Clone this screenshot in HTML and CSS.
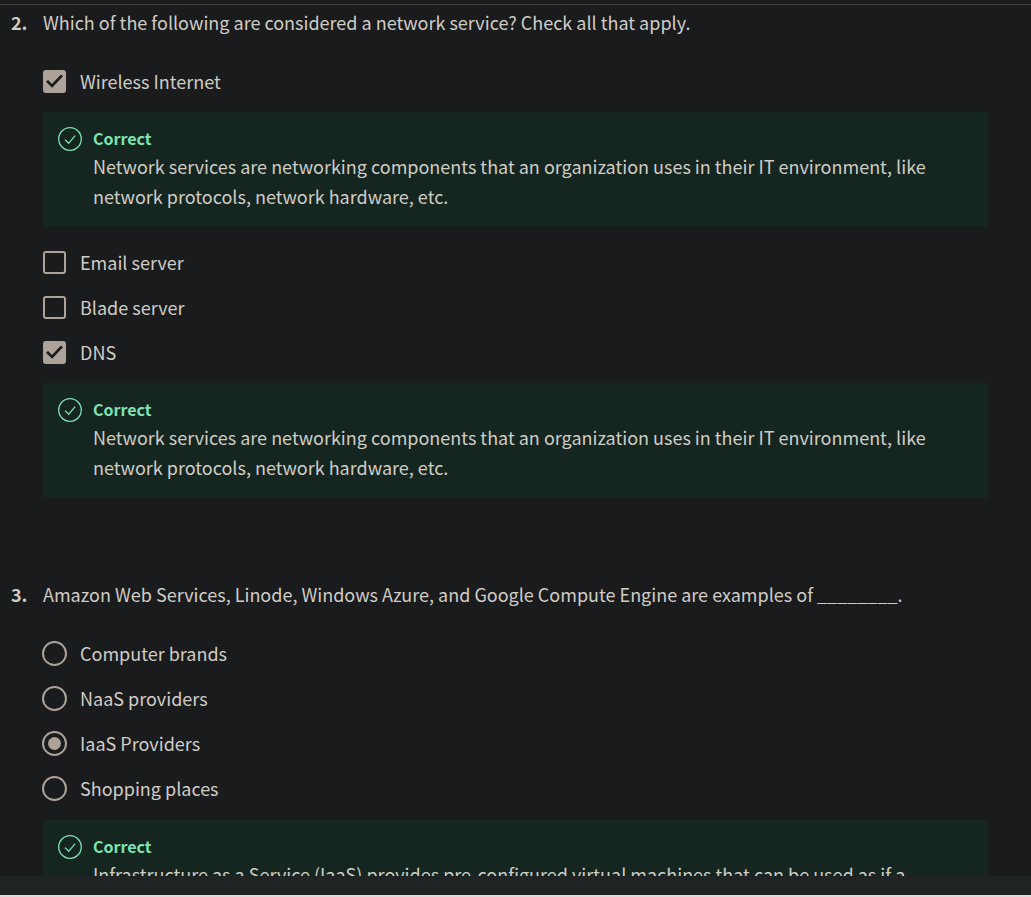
FILE: index.html
```html
<!DOCTYPE html>
<html lang="en">
<head>
<meta charset="utf-8">
<meta name="viewport" content="width=device-width, initial-scale=1">
<title>Quiz</title>
<link rel="stylesheet" href="styles.css">
</head>
<body>
<svg class="sprite" aria-hidden="true">
  <symbol id="correct" viewBox="0 0 24 24">
    <circle cx="12" cy="12" r="11.3"/>
    <path d="M7 12.6l3.7 3.7 6.4-7.6"/>
  </symbol>
</svg>
<main class="quiz">
  <section class="question">
    <span class="number">2.</span>
    <p class="prompt" id="q2">Which of the following are considered a network service? Check all that apply.</p>
    <div class="answers" role="group" aria-labelledby="q2">
      <label class="option"><input class="check" type="checkbox" checked>Wireless Internet</label>
      <div class="feedback">
        <svg class="icon" aria-hidden="true"><use href="#correct"/></svg>
        <div class="message">
          <strong class="verdict">Correct</strong>
          <p class="detail">Network services are networking components that an organization uses in their IT environment, like network protocols, network hardware, etc.</p>
        </div>
      </div>
      <label class="option"><input class="check" type="checkbox">Email server</label>
      <label class="option"><input class="check" type="checkbox">Blade server</label>
      <label class="option"><input class="check" type="checkbox" checked>DNS</label>
      <div class="feedback">
        <svg class="icon" aria-hidden="true"><use href="#correct"/></svg>
        <div class="message">
          <strong class="verdict">Correct</strong>
          <p class="detail">Network services are networking components that an organization uses in their IT environment, like network protocols, network hardware, etc.</p>
        </div>
      </div>
    </div>
  </section>
  <section class="question">
    <span class="number">3.</span>
    <p class="prompt" id="q3">Amazon Web Services, Linode, Windows Azure, and Google Compute Engine are examples of ________.</p>
    <div class="answers single" role="radiogroup" aria-labelledby="q3">
      <label class="option"><input class="radio" type="radio" name="q3">Computer brands</label>
      <label class="option"><input class="radio" type="radio" name="q3">NaaS providers</label>
      <label class="option"><input class="radio" type="radio" name="q3" checked>IaaS Providers</label>
      <label class="option"><input class="radio" type="radio" name="q3">Shopping places</label>
      <div class="feedback">
        <svg class="icon" aria-hidden="true"><use href="#correct"/></svg>
        <div class="message">
          <strong class="verdict">Correct</strong>
          <p class="detail">Infrastructure as a Service (IaaS) provides pre-configured virtual machines that can be used as if a</p>
        </div>
      </div>
    </div>
  </section>
</main>
<footer class="bar"></footer>
</body>
</html>
```
FILE: styles.css
```css
* {
  box-sizing: border-box;
}

body {
  margin: 0;
  height: 100vh;
  display: flex;
  flex-direction: column;
  background: #1a1b1d;
  color: #d0ccc6;
  font-family: "Noto Sans CJK SC", "Noto Sans", sans-serif;
  font-size: 18px;
  line-height: 30px;
}

p {
  margin: 0;
}

.sprite {
  display: none;
}

.quiz {
  flex: 1;
  min-height: 0;
  overflow: hidden;
  padding-top: 4px;
}

.question {
  display: grid;
  grid-template-columns: 32px 1fr;
  row-gap: 21px;
  padding: 2px 43px 0 11px;
}

.question:first-child {
  border-top: 1px solid #404445;
}

.question + .question {
  margin-top: 67px;
}

.number {
  font-weight: 700;
}

.answers {
  grid-column: 2;
}

.option {
  display: flex;
  align-items: center;
  gap: 14px;
  height: 45px;
}

.check,
.radio {
  appearance: none;
  flex: none;
  display: grid;
  place-items: center;
  border: 2px solid #aca297;
}

.check {
  width: 23px;
  height: 23px;
  margin: 2px 0 0;
  border-radius: 3px;
}

.check:checked {
  background: #aca297;
}

.check:checked::before {
  content: "";
  width: 17px;
  height: 14px;
  background: #1a1b1d;
  clip-path: polygon(0 52%, 12% 40%, 35% 67%, 88% 0, 100% 13%, 36% 94%);
}

.radio {
  width: 25px;
  height: 25px;
  margin: 2px -1px 0;
  border-radius: 50%;
}

.radio:checked::before {
  content: "";
  width: 13px;
  height: 13px;
  border-radius: 50%;
  background: #aca297;
}

.feedback {
  display: flex;
  gap: 11px;
  margin: 9px 0 12px;
  padding: 13px 16px 16px 15px;
  background: #152620;
}

.single .feedback {
  margin-top: 10px;
}

.icon {
  flex: none;
  width: 24px;
  height: 24px;
  margin-top: 2px;
  fill: none;
  stroke: #7ee2b4;
  stroke-width: 1.3;
}

.verdict {
  display: block;
  font-size: 16px;
  line-height: 26px;
  color: #7ee2b4;
}

.bar {
  height: 21px;
  background: #1f2324;
  border-bottom: 2px solid #dcdcdc;
}
```
